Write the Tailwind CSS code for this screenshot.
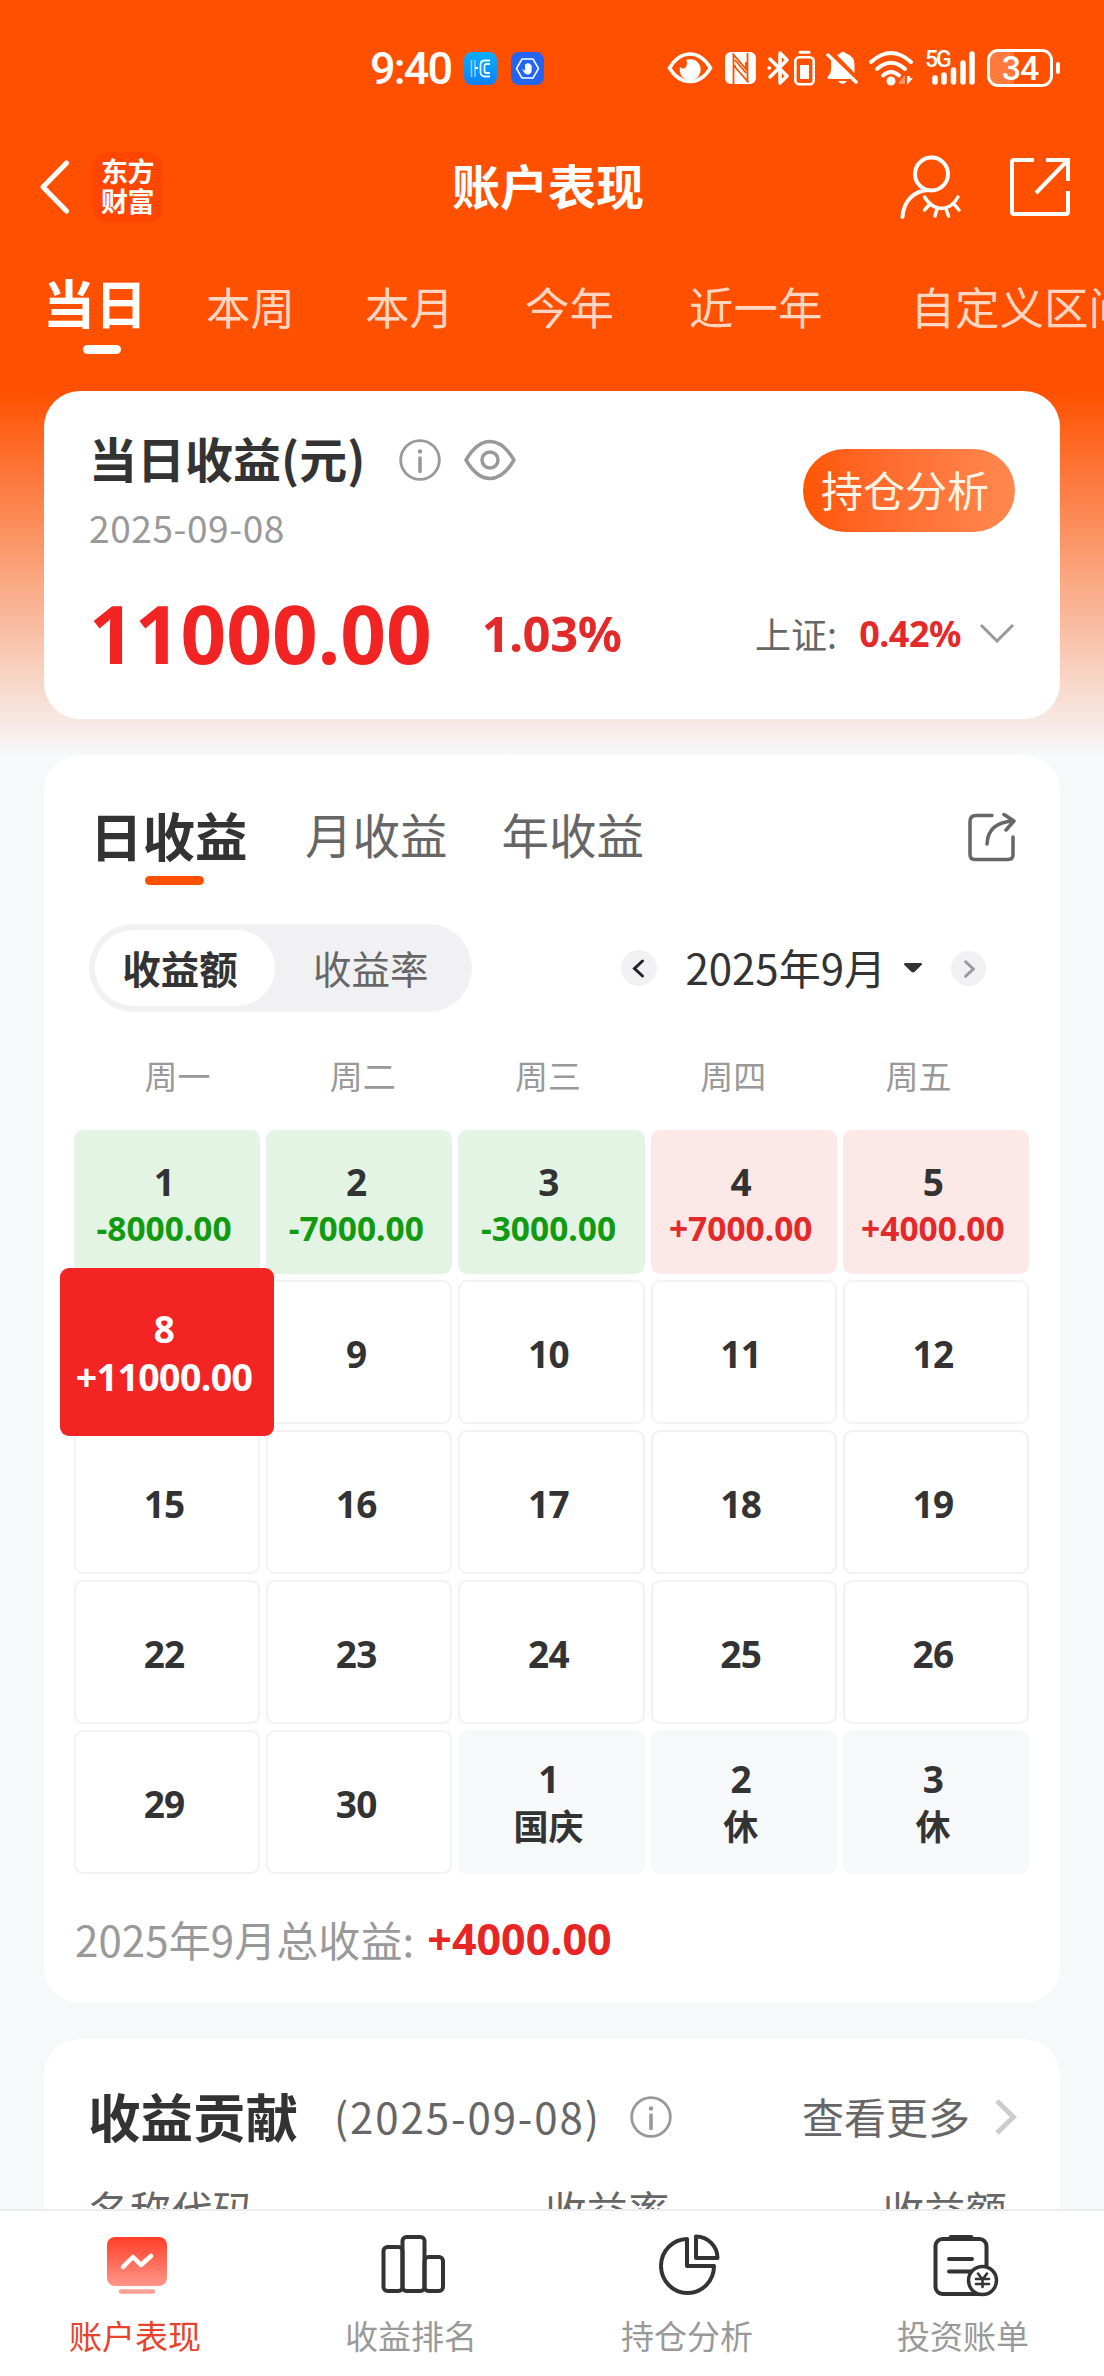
<!DOCTYPE html>
<html lang="zh-CN">
<head>
    <meta charset="UTF-8">
    <meta name="viewport" content="width=device-width, initial-scale=1.0">
    <title>账户表现</title>
    <script src="https://cdn.jsdelivr.net/npm/@tailwindcss/browser@4"></script>
</head>
<body class="w-[1104px] h-[2376px] overflow-hidden flex flex-col bg-[#f6f8fa] text-[#333] whitespace-nowrap font-[family-name:'Noto_Sans_CJK_SC',sans-serif]">
    <div class="flex-1 min-h-0 overflow-hidden bg-[linear-gradient(to_bottom,#ff5000_391px,#f6f8fa_755px)]">

        <!-- Status bar -->
        <div class="h-[136px] flex items-center pl-[370px] pr-[44px] text-white">
            <span class="w-[94px] text-[45px] leading-none font-medium tracking-[-1.8px] font-[family-name:Roboto,sans-serif]">9:40</span>
            <svg class="w-[33px] h-[33px]" viewBox="0 0 33 33" fill="none">
                <defs>
                    <linearGradient id="appIcon" x1="0" y1="0" x2="0" y2="1">
                        <stop offset="0" stop-color="#08aeff"/>
                        <stop offset="1" stop-color="#0d80fa"/>
                    </linearGradient>
                </defs>
                <rect width="33" height="33" rx="8" fill="url(#appIcon)"/>
                <path d="M7.500 8v17M11 8v17" stroke="#8fd4ff" stroke-width="1.500"/>
                <path d="M11 16h3" stroke="#fff" stroke-width="2"/>
                <path d="M26 8.500h-5q-4.500 0-4.500 4.500v7q0 4.500 4.500 4.500h5M26 12h-3.500q-2 0-2 2v5q0 2 2 2H26" stroke="#e8f6ff" stroke-width="1.800"/>
            </svg>
            <svg class="w-[33px] h-[33px] ml-[14px]" viewBox="0 0 33 33" fill="none">
                <rect width="33" height="33" rx="8" fill="#2264f5"/>
                <path d="M11 7h11l5.500 9.500-5.500 9.500H11L5.500 16.500z" stroke="#fff" stroke-width="1.500" stroke-linejoin="round"/>
                <path d="M11 17l3 1.500v-6q.8-1 1.500 0v-1q.8-1 1.800 0q1-1 1.800 1q1-.5 1.500 1v5q0 3.500-3.500 4q-3 0-4-2z" fill="#fff"/>
            </svg>

            <div class="ml-auto flex items-center">
                <svg class="w-[46px] h-[36px]" viewBox="0 0 46 36" fill="none">
                    <path d="M2.500 18C8 9 15 4 23 4s15 5 20.500 14C38 27 31 31.500 23 31.500S8 27 2.500 18z" stroke="#fff" stroke-width="3.500"/>
                    <path d="M19 10a10.500 10.500 0 1 1-6 7q3 3 6 0q2-4 0-7z" fill="#fff"/>
                </svg>
                <svg class="w-[31px] h-[34px] ml-[12px]" viewBox="0 0 31 34" fill="none">
                    <rect y="1" width="31" height="32" rx="6" fill="#fff"/>
                    <path d="M8.500 4v29M7.500 2.500L21 18V11M22.500 2v28M10 14v2l13.500 15.500M10 9l11 13" stroke="#ff5000" stroke-width="1.800"/>
                </svg>
                <svg class="w-[24px] h-[36px] ml-[11px]" viewBox="0 0 24 36" fill="none" stroke="#fff" stroke-width="3.500" stroke-linejoin="round" stroke-linecap="round">
                    <path d="M3 9l17 17-7 7V3l7 7L3 27"/>
                    <path d="M2 18h.5"/>
                </svg>
                <svg class="w-[21px] h-[36px] ml-[3px]" viewBox="0 0 21 36" fill="none">
                    <path d="M6 2.200h9" stroke="#fff" stroke-width="3" stroke-linecap="round"/>
                    <rect x="1.300" y="7.300" width="18.400" height="27" rx="4" stroke="#fff" stroke-width="2.600"/>
                    <rect x="6" y="15" width="9" height="14" fill="#fff"/>
                </svg>
                <svg class="w-[32px] h-[36px] ml-[11px]" viewBox="0 0 32 36">
                    <path d="M5 10L25 29H3q-3-1 0-4q2-2 2-6z" fill="#fff"/>
                    <path d="M11 5q3-1 3.500-2q2.500-2.500 5 0q9 3 9 12v8z" fill="#fff"/>
                    <path d="M2 5L30 32" stroke="#fff" stroke-width="3.500" stroke-linecap="round"/>
                    <path d="M12 31h9q-4.500 6-9 0z" fill="#fff"/>
                </svg>
                <svg class="w-[44px] h-[36px] ml-[11px]" viewBox="0 0 44 36" fill="none" stroke="#fff" stroke-width="4" stroke-linecap="round">
                    <path d="M2 12q20-18 40 0"/>
                    <path d="M8 19q14-12.500 28 0"/>
                    <path d="M14 25.500q8-7 16 0"/>
                    <circle cx="22" cy="31" r="4.500" fill="#fff" stroke="none"/>
                    <path d="M30 32l6-7v9h-6z" fill="#ff9466" stroke="none"/>
                    <path d="M38 26v9l6-7h-3v-2z" fill="#fff" stroke="none"/>
                </svg>
                <div class="w-[50px] h-[36px] ml-[12px] relative">
                    <span class="absolute left-0 top-0 text-[23px] leading-[20px] font-medium tracking-[-2px] font-[family-name:Roboto,sans-serif]">5G</span>
                    <svg class="w-[50px] h-[36px]" viewBox="0 0 50 36" stroke="#fff" stroke-width="5.500" stroke-linecap="round">
                        <path d="M10 28v4M19 25v7M28.500 20v12M38 13v19M47 4v28"/>
                    </svg>
                </div>
                <div class="w-[66px] h-[38px] ml-[12px] rounded-[11px] border-3 border-white flex items-center justify-center bg-[linear-gradient(to_right,#ff7a3c_40%,transparent_40%)]">
                    <span class="text-[34px] leading-none font-medium tracking-[-1px] font-[family-name:Roboto,sans-serif]">34</span>
                </div>
                <div class="w-[4px] h-[12px] ml-[3px] rounded-full bg-white"></div>
            </div>
        </div>

        <!-- Nav bar -->
        <div class="h-[102px] flex items-center pl-[40px] pr-[34px] text-white">
            <div class="w-[412px] flex items-center">
                <svg class="w-[30px] h-[54px]" viewBox="0 0 30 54" fill="none" stroke="#fff" stroke-width="5" stroke-linecap="round" stroke-linejoin="round">
                    <path d="M26.500 3L3 27l23.500 24"/>
                </svg>
                <div class="w-[71px] h-[71px] ml-[22px] pb-[3px] rounded-[15px] bg-[#ff4600] flex flex-col items-center justify-center text-[27px] leading-[30px] font-bold tracking-[-0.5px]">
                    <span>东方</span>
                    <span>财富</span>
                </div>
            </div>
            <h1 class="text-[48px] leading-[72px] pb-[6px] font-bold">账户表现</h1>
            <svg class="w-[62px] h-[66px] ml-auto" viewBox="0 0 62 66" fill="none" stroke="#fff" stroke-width="4" stroke-linecap="round">
                <circle cx="31.500" cy="20" r="16.500"/>
                <path d="M2.500 63C3.500 47 14 36.500 29 36"/>
                <path d="M24.500 43Q31 54 41.500 54.500Q52 54 58 43M29 51l-4.500 5M37 55l-2 7M46 55l2.500 7M54 50l5 6" stroke-width="3.500"/>
            </svg>
            <svg class="w-[60px] h-[62px] ml-[48px]" viewBox="0 0 60 62" fill="none" stroke="#fff" stroke-width="4">
                <path d="M24 4H4q-2 0-2 2v50q0 2 2 2h52q2 0 2-2V35"/>
                <path d="M36 4h22v21M57 5L26 37"/>
            </svg>
        </div>

        <!-- Period tabs -->
        <div class="h-[153px] pt-[28px] pl-[43px] flex items-start text-[44.5px] leading-[80px] text-[#ffd6c2]">
            <div class="w-[104px] flex flex-col text-white">
                <span class="text-[52px] leading-[72px] font-bold">当日</span>
                <span class="w-[38px] h-[9px] mt-[7px] ml-[40px] rounded-full bg-white"></span>
            </div>
            <span class="ml-[59px]">本周</span>
            <span class="ml-[70px]">本月</span>
            <span class="ml-[71px]">今年</span>
            <span class="ml-[75px]">近一年</span>
            <span class="ml-[88px]">自定义区间</span>
        </div>

        <div class="px-[44px] flex flex-col gap-[36px]">
            <!-- Today's profit -->
            <section class="h-[328px] rounded-[36px] bg-white px-[45px] pt-[33px]">
                <div class="flex justify-between">
                    <div>
                        <div class="flex items-center h-[72px]">
                            <h2 class="text-[48px] font-bold leading-[72px] pb-[6px]">当日收益(元)</h2>
                            <svg class="w-[42px] h-[42px] ml-[34px]" viewBox="0 0 42 42" fill="none" stroke="#999" stroke-width="2.800">
                                <circle cx="21" cy="21" r="19.300"/>
                                <path d="M21 19v13.500" stroke-width="3.600" stroke-linecap="round"/>
                                <circle cx="21" cy="12.500" r="2.200" fill="#999" stroke="none"/>
                            </svg>
                            <svg class="w-[54px] h-[42px] ml-[22px]" viewBox="0 0 54 42" fill="none" stroke="#999" stroke-width="3.500">
                                <path d="M3 21C10 9 18 2.500 27 2.500S44 9 51 21C44 33 36 39.500 27 39.500S10 33 3 21z" stroke-linejoin="round"/>
                                <circle cx="27" cy="21" r="8"/>
                            </svg>
                        </div>
                        <p class="text-[37px] leading-[56px] mt-[3px] text-[#999] tracking-[0.6px]">2025-09-08</p>
                    </div>
                    <button class="w-[212px] h-[83px] mt-[25px] pl-[18px] pb-[4px] rounded-full bg-linear-to-r from-[#ff5500] to-[#ff884f] text-left text-[42px] text-[#fff4e4]">持仓分析</button>
                </div>
                <div class="mt-[23px] h-[110px] flex items-center font-bold text-[#f22323]">
                    <span class="text-[80px] font-[family-name:'Noto_Sans',sans-serif]">11000.00</span>
                    <span class="ml-[50px] text-[49px] pt-[2px] text-[#e32a2a] tracking-[-0.5px] font-[family-name:'Noto_Sans',sans-serif]">1.03%</span>
                    <span class="ml-auto text-[36px] font-normal text-[#666]">上证:</span>
                    <span class="ml-[22px] text-[36px] pt-[2px] text-[#e32a2a] tracking-[-0.5px] font-[family-name:'Noto_Sans',sans-serif]">0.42%</span>
                    <svg class="w-[36px] h-[20px] ml-[18px]" viewBox="0 0 36 20" fill="none" stroke="#999" stroke-width="3">
                        <path d="M2 2l16 16L34 2"/>
                    </svg>
                </div>
            </section>

            <!-- Profit calendar -->
            <section class="h-[1248px] rounded-[36px] bg-white">
                <div class="h-[131px] pt-[41px] pl-[46px] pr-[44px] flex items-start text-[47.5px] leading-[76px] text-[#666]">
                    <div class="w-[157px] flex flex-col">
                        <span class="text-[52.5px] font-bold text-[#333]">日收益</span>
                        <span class="w-[59px] h-[9px] mt-[4px] ml-[55px] rounded-full bg-[#ff5000]"></span>
                    </div>
                    <span class="ml-[58px]">月收益</span>
                    <span class="ml-[54px]">年收益</span>
                    <svg class="w-[48px] h-[50px] ml-auto mt-[16px]" viewBox="0 0 48 50" fill="none" stroke="#666" stroke-width="3.500" stroke-linecap="round" stroke-linejoin="round">
                        <path d="M24 3.500H8q-6 0-6 6v33q0 5 5 5h33q5 0 5-5V25"/>
                        <path d="M19 32Q20 10 46 9M36 2.500L46 9l-8 9"/>
                    </svg>
                </div>

                <div class="mt-[38px] pl-[45px] pr-[74px] h-[88px] flex items-center">
                    <div class="w-[383px] h-[88px] p-[6px] rounded-full bg-[#f1f1f4] flex text-[38.5px] leading-[74px]">
                        <span class="w-[180px] pr-[10px] rounded-full bg-white text-center font-bold">收益额</span>
                        <span class="ml-[38px] text-[#666]">收益率</span>
                    </div>
                    <svg class="w-[36px] h-[36px] ml-auto" viewBox="0 0 36 36" fill="none">
                        <circle cx="18" cy="18" r="18" fill="#f1f1f4"/>
                        <path d="M21.500 11l-8 7.500 8 7.500" stroke="#222" stroke-width="3" stroke-linecap="round"/>
                    </svg>
                    <span class="ml-[28px] pb-[4px] text-[42px]">2025年9月</span>
                    <svg class="w-[18px] h-[10px] ml-[18px]" viewBox="0 0 18 10">
                        <path d="M1 0h16q2 1 0 2.500l-6 6q-2 2-4 0l-6-6q-2-1.500 0-2.500z" fill="#333"/>
                    </svg>
                    <svg class="w-[35px] h-[35px] ml-[29px]" viewBox="0 0 36 36" fill="none">
                        <circle cx="18" cy="18" r="18" fill="#f1f1f4"/>
                        <path d="M15 11l8 7.500-8 7.500" stroke="#999" stroke-width="3" stroke-linecap="round"/>
                    </svg>
                </div>

                <div class="mt-[38px] ml-[41px] w-[926px] grid grid-cols-5 text-center text-[33px] leading-[50px] text-[#999]">
                    <span>周一</span>
                    <span>周二</span>
                    <span>周三</span>
                    <span>周四</span>
                    <span>周五</span>
                </div>

                <div id="calendar" class="mt-[30px] ml-[30px] w-[955px] grid grid-cols-5 gap-[6px] font-bold font-[family-name:'Noto_Sans','Noto_Sans_CJK_SC',sans-serif]"></div>

                <p class="mt-[32px] pl-[31px] h-[64px] flex items-center text-[42px] text-[#999]">
                    <span class="tracking-[0.1px]">2025年9月总收益:</span>
                    <span class="ml-[13px] pt-[2px] text-[43px] font-bold text-[#e82525] font-[family-name:'Noto_Sans',sans-serif]">+4000.00</span>
                </p>
            </section>

            <!-- Profit contribution -->
            <section class="h-[400px] rounded-t-[36px] bg-white pt-[40px] pl-[44px] pr-[43px]">
                <div class="h-[76px] flex items-center text-[#666]">
                    <h2 class="pb-[4px] text-[52.5px] font-bold text-[#333]">收益贡献</h2>
                    <span class="ml-[36px] pb-[3px] text-[42px] tracking-[1.9px]">(2025-09-08)</span>
                    <svg class="w-[42px] h-[42px] ml-[29px]" viewBox="0 0 42 42" fill="none" stroke="#999" stroke-width="2.800">
                        <circle cx="21" cy="21" r="19.300"/>
                        <path d="M21 19v13.500" stroke-width="3.600" stroke-linecap="round"/>
                        <circle cx="21" cy="12.500" r="2.200" fill="#999" stroke="none"/>
                    </svg>
                    <span class="ml-auto pb-[4px] text-[42px]">查看更多</span>
                    <svg class="w-[22px] h-[36px] ml-[25px]" viewBox="0 0 22 36" fill="none" stroke="#ccc" stroke-width="5">
                        <path d="M2 2l16.500 16L2 34"/>
                    </svg>
                </div>
                <div class="mt-[23px] pr-[10px] flex text-[41.5px] leading-[62px] text-[#666]">
                    <span class="w-[457px]">名称代码</span>
                    <span>收益率</span>
                    <span class="ml-auto">收益额</span>
                </div>
            </section>
        </div>
    </div>

    <!-- Tab bar -->
    <nav class="h-[167px] shrink-0 border-t-2 border-[#ebecee] bg-white grid grid-cols-4 text-[33px] leading-[50px] text-[#999]">
        <div class="flex flex-col items-center pt-[22px] pr-[6px] text-[#e8432e]">
            <svg class="w-[66px] h-[66px] ml-[4px]" viewBox="0 0 66 66" fill="none">
                <defs>
                    <linearGradient id="screen" x1="0" y1="0" x2="0" y2="1">
                        <stop offset="0" stop-color="#ff3d26"/>
                        <stop offset="1" stop-color="#ff978a"/>
                    </linearGradient>
                </defs>
                <rect x="3" y="4" width="60" height="49" rx="8" fill="url(#screen)"/>
                <path d="M19 34l10-10 8 8 10-9" stroke="#fff" stroke-width="4.500" stroke-linecap="round" stroke-linejoin="round"/>
                <path d="M17 58.500h32" stroke="#f9a094" stroke-width="4.500" stroke-linecap="round"/>
            </svg>
            <span class="mt-[11px]">账户表现</span>
        </div>
        <div class="flex flex-col items-center pt-[22px] pr-[6px]">
            <svg class="w-[66px] h-[66px] ml-[4px]" viewBox="0 0 66 66" fill="none" stroke="#333" stroke-width="4">
                <rect x="3.500" y="14" width="19" height="44" rx="4"/>
                <rect x="22.500" y="4" width="22" height="54" rx="4"/>
                <rect x="44.500" y="24" width="18.500" height="34" rx="4"/>
            </svg>
            <span class="mt-[11px]">收益排名</span>
        </div>
        <div class="flex flex-col items-center pt-[22px] pr-[6px]">
            <svg class="w-[66px] h-[66px] ml-[4px]" viewBox="0 0 66 66" fill="none" stroke="#333" stroke-width="4" stroke-linejoin="round">
                <path d="M31 6A26.500 27 0 1 0 58 33H31z"/>
                <path d="M40 3.500V25h21.500A21.500 21.500 0 0 0 40 3.500z"/>
            </svg>
            <span class="mt-[11px]">持仓分析</span>
        </div>
        <div class="flex flex-col items-center pt-[22px] pr-[6px]">
            <svg class="w-[66px] h-[66px] ml-[6px]" viewBox="0 0 66 66" fill="none" stroke="#333" stroke-width="4" stroke-linecap="round">
                <rect x="2.500" y="6" width="51" height="55" rx="7"/>
                <path d="M18 4.500h20" stroke-width="5"/>
                <path d="M16 26h23M16 38.500h23"/>
                <circle cx="49.500" cy="47.500" r="14" fill="#fff" stroke-width="3.500"/>
                <path d="M45 40.500l4.500 6 4.500-6M49.500 46v8M43 46h13M43 51h13" stroke-width="2.600"/>
            </svg>
            <span class="mt-[11px]">投资账单</span>
        </div>
    </nav>

    <script>
        const days = [
            { day: 1, note: '-8000.00', type: 'loss' },
            { day: 2, note: '-7000.00', type: 'loss' },
            { day: 3, note: '-3000.00', type: 'loss' },
            { day: 4, note: '+7000.00', type: 'gain' },
            { day: 5, note: '+4000.00', type: 'gain' },
            { day: 8, note: '+11000.00', type: 'selected' },
            { day: 9 }, { day: 10 }, { day: 11 }, { day: 12 },
            { day: 15 }, { day: 16 }, { day: 17 }, { day: 18 }, { day: 19 },
            { day: 22 }, { day: 23 }, { day: 24 }, { day: 25 }, { day: 26 },
            { day: 29 }, { day: 30 },
            { day: 1, note: '国庆', type: 'holiday' },
            { day: 2, note: '休', type: 'holiday' },
            { day: 3, note: '休', type: 'holiday' }
        ];

        const cellClass = {
            loss: 'pt-[5px] bg-[#e3f4e4]',
            gain: 'pt-[5px] bg-[#fde8e8]',
            selected: 'relative z-10 -mx-[14px] -my-[12px] pt-[2px] bg-[#f32424] text-white',
            holiday: 'pt-[4px] bg-[#f6f8fa]',
            plain: 'pt-[3px] border-2 border-[#f2f2f3]'
        };
        const noteClass = {
            loss: 'text-[33.5px] leading-[46px] text-[#129a12]',
            gain: 'text-[33.5px] leading-[46px] text-[#e32a2a]',
            selected: 'text-[37.5px] leading-[49px] tracking-[-0.6px]',
            holiday: 'text-[35px] leading-[50px]'
        };

        let html = '';
        days.forEach(item => {
            const type = item.type || 'plain';
            const height = type === 'selected' ? 'h-[168px]' : 'h-[144px]';
            html += `<div class="${height} pr-[6px] rounded-[9px] flex flex-col items-center justify-center ${cellClass[type]}">`;
            html += `<span class="text-[37px] leading-[46px] tracking-[-0.7px]">${item.day}</span>`;
            if (item.note) {
                html += `<span class="${noteClass[type]}">${item.note}</span>`;
            }
            html += '</div>';
        });
        document.getElementById('calendar').innerHTML = html;
    </script>
</body>
</html>
